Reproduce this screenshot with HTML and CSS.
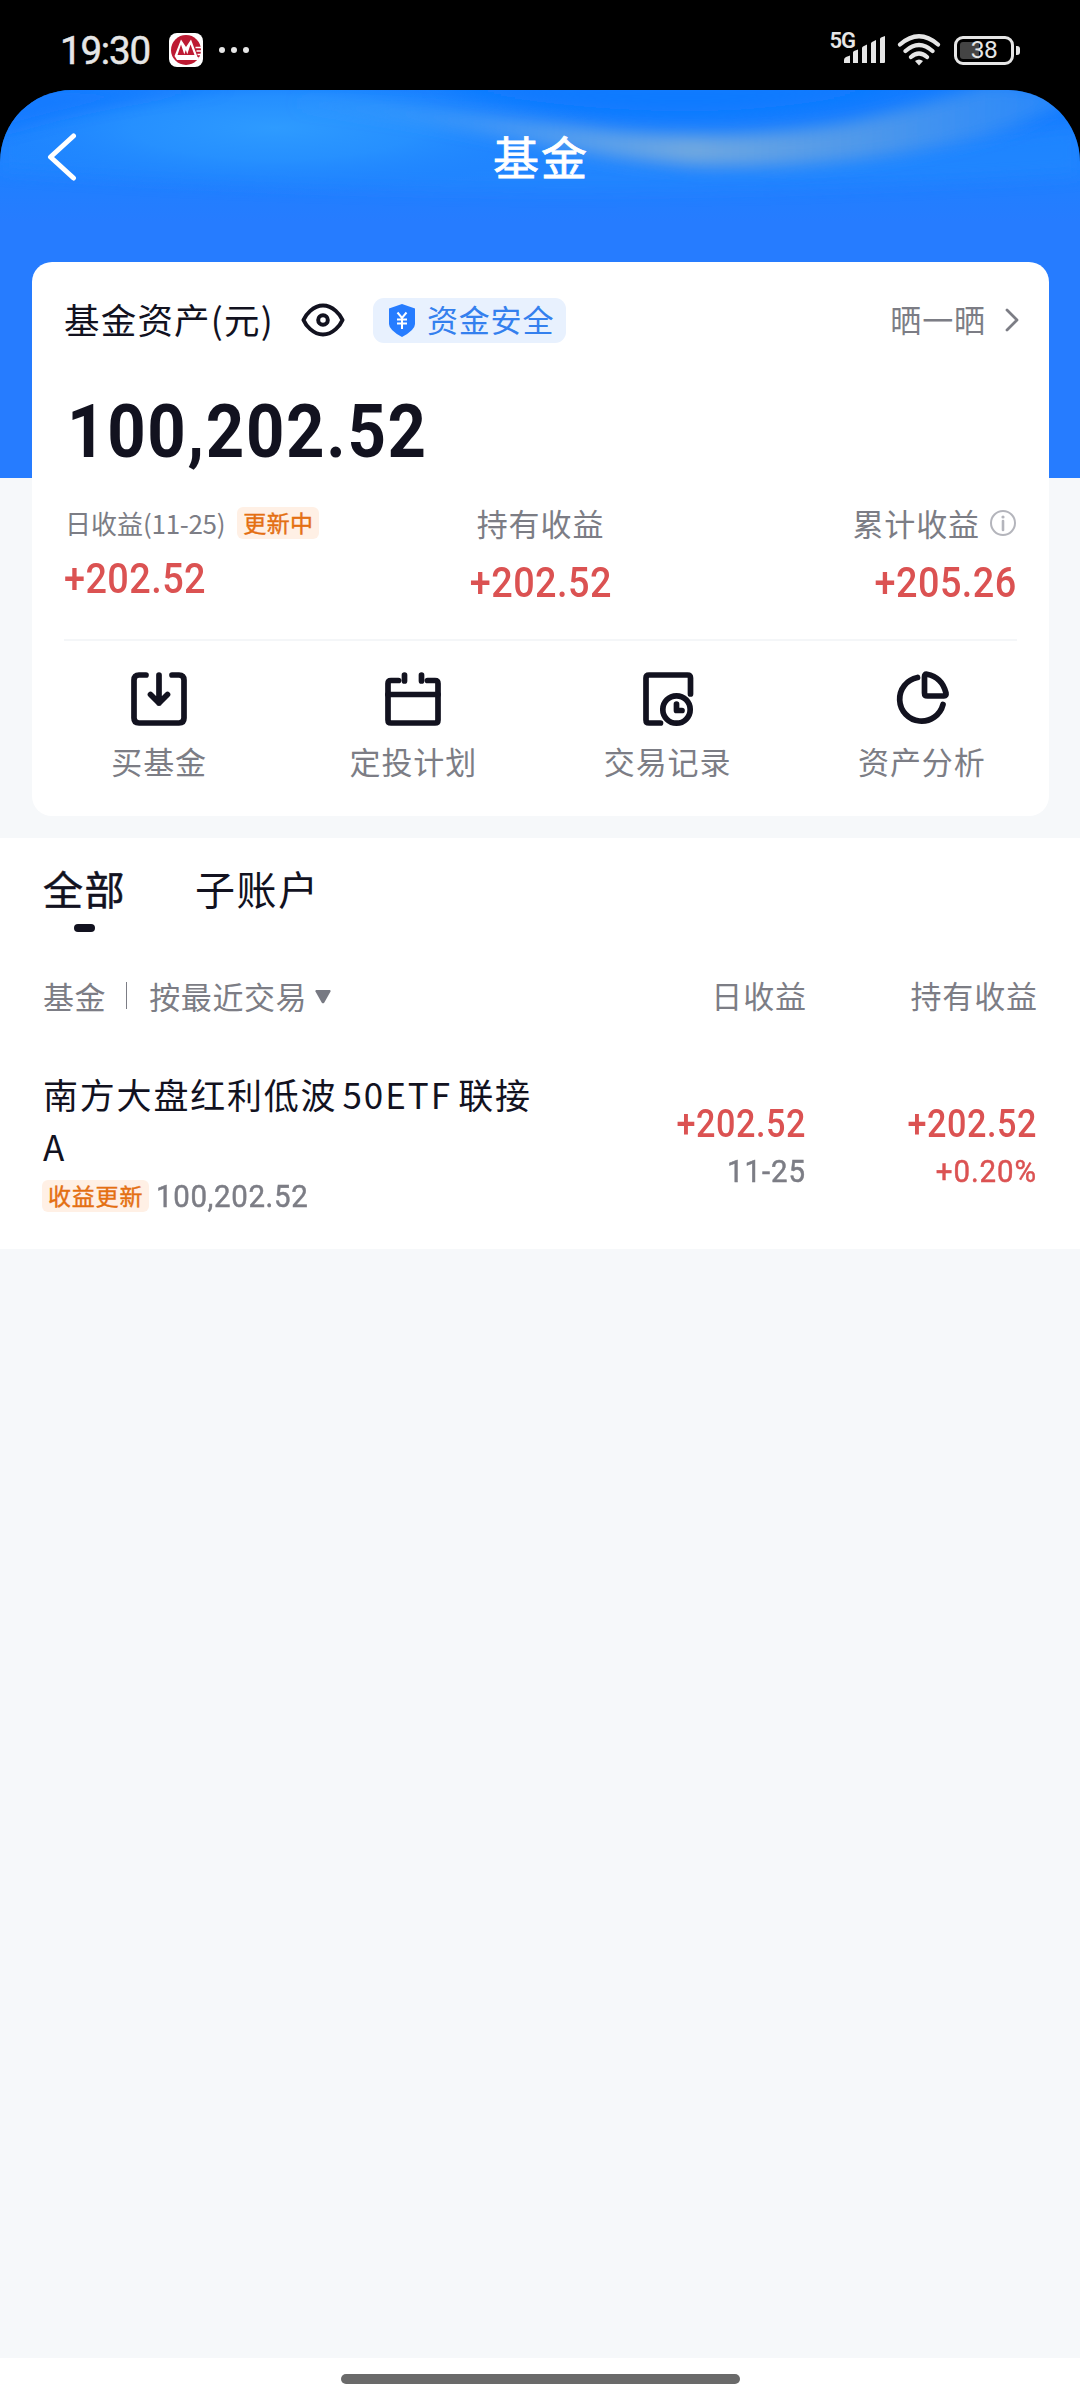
FILE: index.html
```html
<!DOCTYPE html>
<html lang="zh-CN">
<head>
<meta charset="utf-8">
<title>基金</title>
<link rel="stylesheet" href="styles.css">
</head>
<body>
<div class="screen">
  <header class="status">
    <span class="time">19:30</span>
    <svg class="app-logo" width="34" height="34" viewBox="0 0 34 34"><rect width="34" height="34" rx="8" fill="#fff"/><circle cx="17" cy="17" r="15" fill="#bd1a33"/><path d="M5.500 23 12 6.500 17 14 22 6.500 28 22.500Q28 24.500 30 24.500L29 27H8z" fill="#fff"/><path d="m12 11.500 3.500 10.500h-7zM21.500 11.500 25.500 22h-7.500zM16.800 17l1.700 5h-3.400z" fill="#bd1a33"/><path d="M26.500 14.500h6M27.500 18h6M28.500 21.500h4" fill="none" stroke="#fff" stroke-width="1.500"/></svg>
    <span class="dots"><i></i><i></i><i></i></span>
    <span class="net">5G</span>
    <svg class="signal" width="42" height="28" viewBox="0 0 42 28" fill="#e6e6e6"><path d="M0 27v-3q0-2 2-3l4-1.500V27zM9 27V16.500q0-1 1-1.500l4-1.500V27zM18 27V12q0-1 1-1.500l4-2V27zM27 27V7.500q0-1 1-1.500l4-2V27zM36 27V3q0-1 1-1.500L41 0V26q0 1-1 1z"/></svg>
    <svg class="wifi" width="44" height="34" viewBox="0 0 44 34" fill="none" stroke="#e6e6e6" stroke-width="4.200" stroke-linecap="round"><path d="M3 11.500Q22-5 41 11.500M8.500 18Q22 6 35.500 18M14 24Q22 17 30 24"/><path d="M18 28q4-3 8 0L22 32.500z" fill="#e6e6e6" stroke="none"/></svg>
    <span class="battery"><span class="level"></span><b>38</b></span>
    <span class="nub"></span>
  </header>

  <section class="hero">
    <svg class="glow" width="1080" height="388" viewBox="0 90 1080 388">
      <defs>
        <linearGradient id="base" x1="0" y1="0" x2="0" y2="1"><stop offset="0" stop-color="#117bff"/><stop offset=".2" stop-color="#1e80ff"/><stop offset=".34" stop-color="#267cff"/><stop offset="1" stop-color="#267cff"/></linearGradient>
        <radialGradient id="light"><stop offset="0" stop-color="#2e9bff"/><stop offset=".45" stop-color="#2893ff" stop-opacity=".8"/><stop offset="1" stop-color="#1d80ff" stop-opacity="0"/></radialGradient>
        <linearGradient id="beam" x1="300" y1="0" x2="1080" y2="0" gradientUnits="userSpaceOnUse"><stop offset="0" stop-color="#3f9cfb" stop-opacity=".3"/><stop offset=".25" stop-color="#509ef3" stop-opacity=".8"/><stop offset=".5" stop-color="#70a8e0"/><stop offset=".75" stop-color="#5099ea" stop-opacity=".9"/><stop offset="1" stop-color="#3a92f7" stop-opacity=".5"/></linearGradient>
        <filter id="soft" x="-20%" y="-60%" width="140%" height="220%"><feGaussianBlur stdDeviation="8"/></filter>
      </defs>
      <rect y="90" width="1080" height="388" fill="url(#base)"/>
      <path d="M0 130Q180 94 310 104Q440 112 560 145T760 165T1080 125V175Q800 192 520 190T0 170z" fill="#2389ff" opacity=".6" filter="url(#soft)"/>
      <ellipse cx="275" cy="128" rx="320" ry="70" fill="url(#light)"/>
      <path d="M300 100Q480 114 620 131Q740 142 850 122Q930 104 990 84L1080 92Q1030 128 950 144Q830 170 700 166Q600 160 510 138Q420 118 300 106z" fill="url(#beam)" filter="url(#soft)"/>
      <path d="M430 84Q700 138 900 84z" fill="#107aff" filter="url(#soft)"/>
      <path d="M0 88H230Q110 98 0 132z" fill="#147aff" opacity=".8" filter="url(#soft)"/>
    </svg>
    <div class="nav">
      <svg class="back" width="32" height="50" viewBox="0 0 32 50" fill="none" stroke="#fff" stroke-width="5" stroke-linecap="round" stroke-linejoin="round"><path d="M26.500 4 3.500 25 26.500 46"/></svg>
      <h1>基金</h1>
      <span class="nav-space"></span>
    </div>
  </section>

  <main>
    <section class="card">
      <div class="card-head">
        <span class="asset-label">基金资产(元)</span>
        <svg class="eye" width="44" height="34" viewBox="0 0 44 34" fill="none" stroke="#12121f" stroke-width="4"><path d="M2.500 17C4.500 12 12 2.500 22 2.500S39.500 12 41.500 17C39.500 22 32 31.500 22 31.500S4.500 22 2.500 17z" stroke-linejoin="round"/><circle cx="22" cy="17" r="4.800"/></svg>
        <span class="safe"><svg width="28" height="33" viewBox="0 0 28 33"><path d="M14 0 27 4.500V20Q27 26 14 33Q1 26 1 20V4.500z" fill="#267cff"/><path d="M9.500 8.500 14 14l4.500-5.500M14 14v11M9 15.500h10M9 19.500h10" fill="none" stroke="#fff" stroke-width="2"/></svg><span>资金安全</span></span>
        <span class="share">晒一晒</span>
        <svg class="more" width="14" height="24" viewBox="0 0 14 24" fill="none" stroke="#7c7d85" stroke-width="2.800" stroke-linecap="round" stroke-linejoin="round"><path d="m2 2 10 10L2 22"/></svg>
      </div>
      <div class="amount">100,202.52</div>
      <div class="stats">
        <div class="stat first"><div class="stat-label small"><span>日收益<span class="date">(11-25)</span></span><span class="tag">更新中</span></div><div class="gain">+202.52</div></div>
        <div class="stat mid"><div class="stat-label">持有收益</div><div class="gain">+202.52</div></div>
        <div class="stat last"><div class="stat-label">累计收益<svg width="28" height="28" viewBox="0 0 28 28" fill="none" stroke="#b4b5bc" stroke-width="2"><circle cx="14" cy="14" r="12"/><path d="M14 12v9" stroke-width="2.600" stroke-linecap="round"/><circle cx="14" cy="8" r="1.600" fill="#b4b5bc" stroke="none"/></svg></div><div class="gain">+205.26</div></div>
      </div>
      <div class="actions">
        <div class="action"><svg width="60" height="60" viewBox="0 0 60 60"><path d="M17 6h-7q-5 0-5 5v38q0 5 5 5h40q5 0 5-5V11q0-5-5-5h-7M30 6v28M21.500 25.500l8.500 8.500 8.500-8.500"/></svg><span>买基金</span></div>
        <div class="action"><svg width="60" height="60" viewBox="0 0 60 60"><path d="M15.500 11.500H8q-3 0-3 3V51q0 3 3 3h44q3 0 3-3V14.500q0-3-3-3h-7.500M21.500 6v6M38.500 6v6"/><path d="M5 25.500h50"/></svg><span>定投计划</span></div>
        <div class="action"><svg width="60" height="60" viewBox="0 0 60 60"><path d="M52.500 25V9q0-3-3-3H11q-3 0-3 3v42q0 3 3 3h11.500"/><circle cx="38.500" cy="40.500" r="13.700"/><path d="M38.500 35v6.500h5.500"/></svg><span>交易记录</span></div>
        <div class="action"><svg width="60" height="60" viewBox="0 0 60 60"><path d="M25.500 8.500A22 22 0 1 0 51 35.500"/><path d="M32.500 8v16q0 3 3 3H52q2.500 0 2-3Q50 8 35 5.200q-2.500-.5-2.500 2.800z"/></svg><span>资产分析</span></div>
      </div>
    </section>

    <section class="holdings">
      <nav class="tabs"><span class="tab active">全部</span><span class="tab">子账户</span></nav>
      <div class="row table-head">
        <div class="sort"><span>基金</span><i class="bar"></i><span>按最近交易</span><svg width="16" height="14" viewBox="0 0 16 14"><path d="M1.200 0h13.600q1.200.3.700 1.500L9.200 12.700Q8 14 6.800 12.700L.5 1.500Q0 .3 1.200 0z" fill="#777982"/></svg></div>
        <div class="cell">日收益</div>
        <div class="cell">持有收益</div>
      </div>
      <div class="row fund">
        <div class="fund-info">
          <div class="fund-name">南方大盘红利低波<span class="latin">50ETF</span>联接<br>A</div>
          <div class="fund-sub"><span class="tag">收益更新</span><span class="sub-num">100,202.52</span></div>
        </div>
        <div class="cell"><div class="profit">+202.52</div><div class="sub-num">11-25</div></div>
        <div class="cell"><div class="profit">+202.52</div><div class="sub-num rate">+0.20%</div></div>
      </div>
    </section>
  </main>

  <footer class="home"><span></span></footer>
</div>
</body>
</html>
```
FILE: styles.css
```css
* { box-sizing: border-box; }
body { margin: 0; background: #000; font-family: "Noto Sans CJK SC", sans-serif; color: #12121f; }
svg { display: block; flex: none; }
.screen { width: 1080px; height: 2400px; display: flex; flex-direction: column; overflow: hidden; background: #f6f8fa; white-space: nowrap; }

.status { height: 90px; padding: 10px 60px 0 60px; flex: none; display: flex; align-items: center; background: #000; color: #e6e6e6; font-family: Roboto, sans-serif; }
.time { font-size: 38.500px; letter-spacing: -1.200px; width: 109px; -webkit-text-stroke: .5px #e6e6e6; }
.dots { display: flex; gap: 6px; margin-left: 16px; }
.dots i { width: 6px; height: 6px; border-radius: 3px; background: #e6e6e6; }
.net { margin-left: auto; font-size: 22px; font-weight: 600; line-height: 22px; letter-spacing: -1px; padding-bottom: 18px; }
.signal { margin-left: -11px; }
.wifi { margin-left: 11px; }
.battery { position: relative; margin-left: 13px; width: 60px; height: 29px; border: 3px solid #e6e6e6; border-radius: 9px; display: flex; align-items: center; justify-content: center; }
.level { position: absolute; left: 3px; top: 3px; width: 19px; height: 17px; border-radius: 3px 0 0 3px; background: #444; }
.battery b { position: relative; font-size: 24.500px; font-weight: 400; line-height: 24px; letter-spacing: -.5px; }
.nub { width: 4px; height: 9px; margin: 0 0 0 2px; border-radius: 0 3px 3px 0; background: #e6e6e6; }

.hero { position: relative; height: 388px; margin-bottom: -216px; flex: none; background: linear-gradient(#000 80px, #267cff 80px); }
.glow { border-radius: 72px 72px 0 0; }
.nav { position: absolute; inset: 0 0 auto 0; height: 134px; padding: 0 47px; display: flex; align-items: center; justify-content: space-between; }
.nav-space { width: 30px; }
h1 { margin: -5px 0 0; font-size: 46px; font-weight: 400; line-height: 60px; letter-spacing: 2px; color: #fff; -webkit-text-stroke: .8px #fff; }

main { position: relative; flex: 1; display: flex; flex-direction: column; }
.card { height: 554px; margin: 0 31px 22px 32px; padding: 32px 33px 0 34px; border-radius: 20px; background: #fff; }
.card-head { height: 52px; display: flex; align-items: center; }
.asset-label { font-size: 35.500px; letter-spacing: 1.200px; line-height: 50px; width: 237px; margin: -3px 0 0 -2px; }
.safe { display: flex; align-items: center; gap: 11px; width: 193px; height: 45px; margin-left: 28px; padding-left: 15px; border-radius: 11px; background: #e8f1fe; color: #3480ee; font-size: 31px; letter-spacing: .8px; line-height: 45px; }
.safe span { margin-top: -3px; }
.share { margin: -3px 0 0 auto; color: #7c7d85; font-size: 31px; letter-spacing: .9px; }
.more { margin: 0 -3px 0 19px; }
.amount, .gain, .profit, .sub-num { font-family: Roboto, sans-serif; }
.amount { margin: 45px 0 0 1px; height: 82px; line-height: 82px; font-size: 74.500px; font-weight: 700; transform: scaleX(.9); transform-origin: left; letter-spacing: 1.900px; }
.stats { height: 136px; margin: 32px -1px 0 -2px; display: grid; grid-template-columns: repeat(3, 1fr); border-bottom: 2px solid #f4f6f8; }
.stat.mid { text-align: center; padding: 0; }
.stat.last { text-align: right; }
.stat-label { height: 42px; line-height: 42px; margin-top: -3px; font-size: 31px; letter-spacing: .9px; color: #7c7d85; }
.stat-label.small { font-size: 26px; letter-spacing: 0; padding-left: 1px; }
.date { letter-spacing: -.3px; }
.stat.first .stat-label, .stat.last .stat-label { display: flex; align-items: center; }
.stat.last .stat-label { justify-content: flex-end; gap: 9px; }
.tag { height: 32px; line-height: 30px; padding: 0 6px; margin-left: 12px; border-radius: 6px; background: #fff0e5; color: #e46f12; font-size: 23px; letter-spacing: .4px; -webkit-text-stroke: .4px #e46f12; }
.gain { height: 56px; line-height: 56px; margin-top: 11px; font-size: 42px; font-weight: 500; color: #db5252; letter-spacing: .5px; transform: scaleX(.9); transform-origin: center; }
.first .gain { margin-top: 7px; transform-origin: left; }
.last .gain { transform-origin: right; }
.actions { display: grid; grid-template-columns: repeat(4, 254.250px); margin: 0 -34px; padding-top: 28px; }
.action { display: flex; flex-direction: column; align-items: center; }
.action svg { fill: none; stroke: #12121f; stroke-width: 5.700; stroke-linecap: round; stroke-linejoin: round; }
.action span { margin-top: 9px; line-height: 46px; font-size: 31px; letter-spacing: .9px; color: #7c7d85; }

.holdings { height: 411px; background: #fff; padding: 0 43px 0 43px; }
.tabs { height: 104px; display: flex; gap: 69px; }
.tab { position: relative; height: 98px; line-height: 100px; font-size: 40px; letter-spacing: 1.500px; }
.tab.active { -webkit-text-stroke: .5px #12121f; }
.tab.active::after { content: ""; position: absolute; left: 31px; bottom: 4px; width: 21px; height: 8px; border-radius: 4px; background: #12121f; }
.row { display: grid; grid-template-columns: 1fr 231px 231px; }
.table-head { height: 106px; line-height: 105px; font-size: 31px; letter-spacing: .9px; color: #7c7d85; margin-right: -1px; }
.sort { display: flex; align-items: center; letter-spacing: .6px; }
.bar { width: 1px; height: 27px; background: #7c7d85; margin: 0 22px 0 20px; }
.sort svg { margin: 3px 0 0 8px; }
.cell { text-align: right; }
.fund-name { margin-top: 20px; font-size: 35px; letter-spacing: 1.800px; line-height: 52px; }
.latin { letter-spacing: 2px; margin: 0 6px 0 5px; }
.fund-sub { display: flex; align-items: center; height: 40px; margin: 4px 0 0 -1px; }
.fund-sub .tag { margin: 0 7px 0 0; letter-spacing: .8px; }
.sub-num { font-size: 32px; line-height: 40px; font-weight: 500; letter-spacing: .7px; color: #7c7d85; transform: scaleX(.92); transform-origin: right; }
.fund-sub .sub-num { transform-origin: left; font-weight: 400; -webkit-text-stroke: .5px #7c7d85; }
.cell .sub-num { margin-top: 3px; font-weight: 400; -webkit-text-stroke: .5px #7c7d85; letter-spacing: 1px; }
.profit { margin-top: 52px; height: 48px; line-height: 48px; font-size: 38px; font-weight: 500; letter-spacing: .6px; color: #db5252; transform: scaleX(.9); transform-origin: right; }
.cell .rate { color: #db5252; -webkit-text-stroke-color: #db5252; }

.home { height: 42px; padding-top: 16px; flex: none; background: #fff; }
.home span { display: block; width: 399px; height: 10px; margin: 0 auto; border-radius: 5px; background: #6a6a6a; }
```
